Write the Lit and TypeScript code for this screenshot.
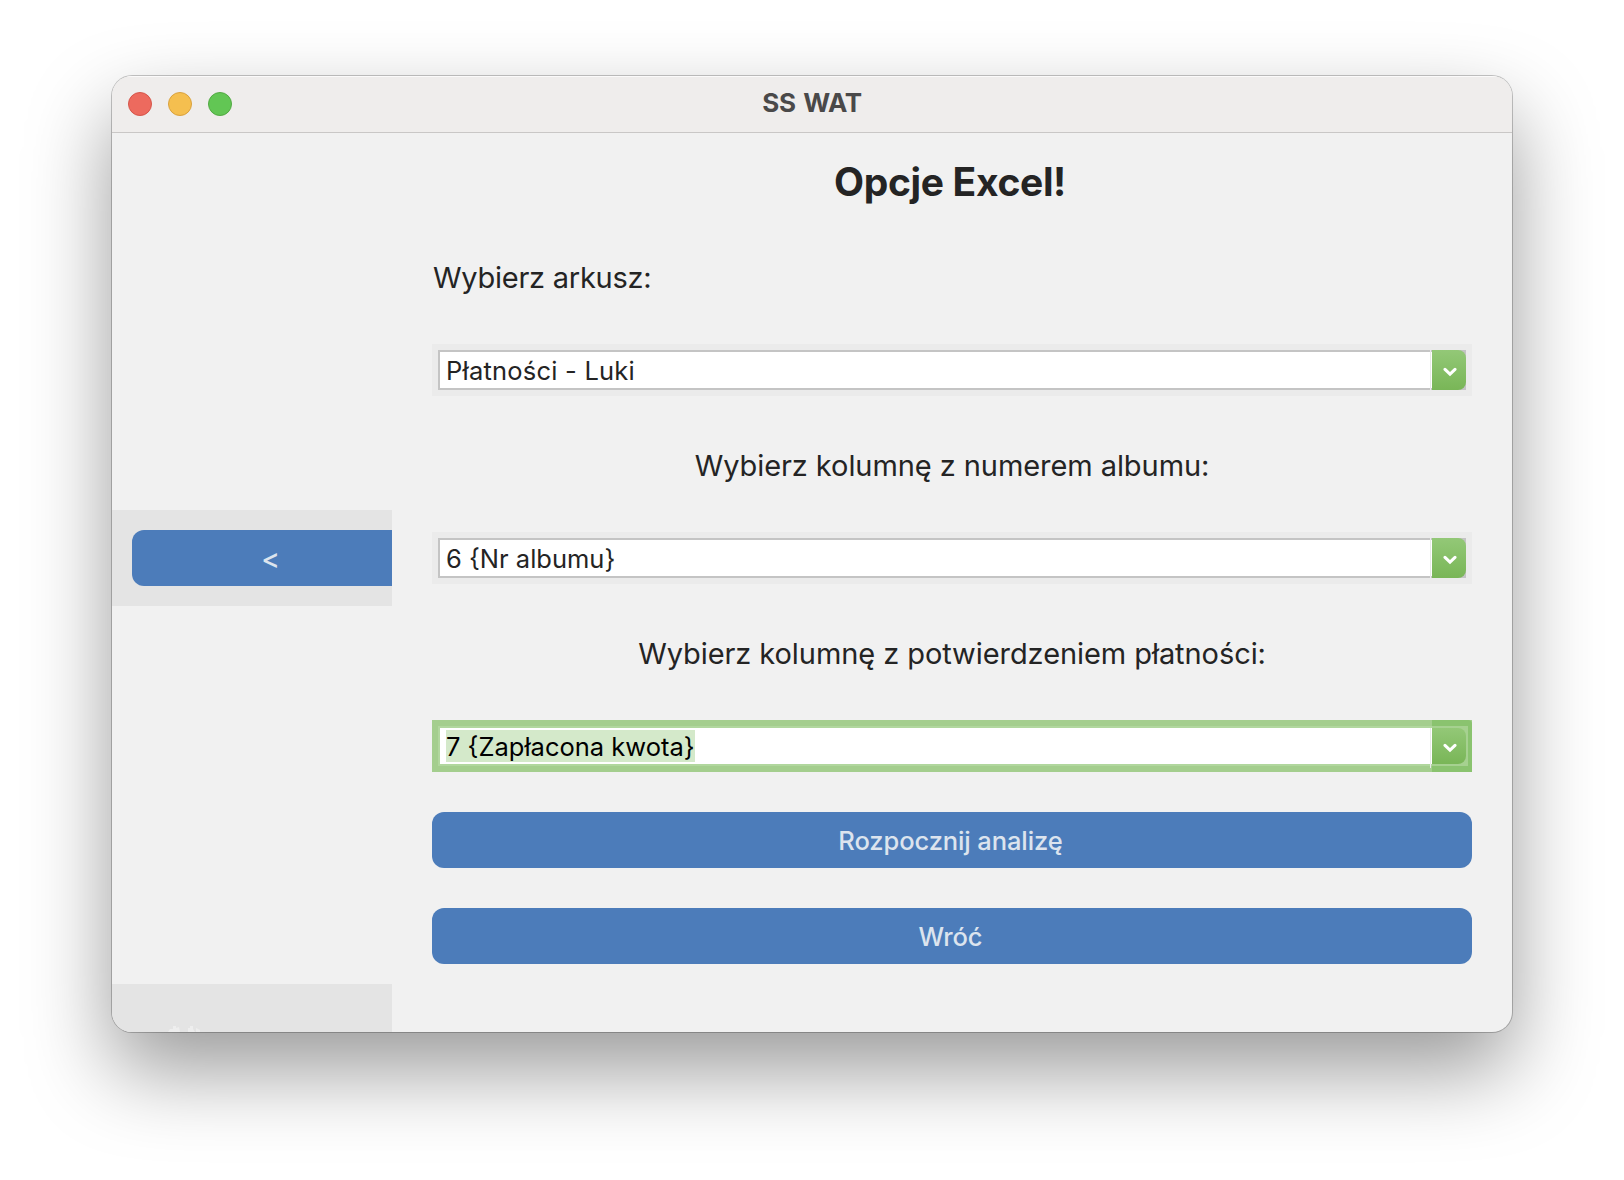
import { LitElement, html, css } from "lit";
import { customElement, property } from "lit/decorators.js";
import { classMap } from "lit/directives/class-map.js";

@customElement("combo-box")
export class ComboBox extends LitElement {
  @property() value = "";
  @property({ type: Boolean }) focused = false;

  static styles = css`
    :host { display: block; }
    .combo {
      box-sizing: border-box;
      height: 52px;
      padding: 6px;
      display: flex;
      background: #ebebeb;
    }
    .field {
      box-sizing: border-box;
      flex: 1;
      height: 40px;
      border: 2px solid #c4c4c4;
      border-right: 0;
      background: #fff;
      display: flex;
      align-items: center;
      justify-content: space-between;
      padding-left: 6px;
    }
    .value {
      font-size: 25.5px;
      line-height: 31px;
      padding-top: 1px;
      white-space: pre;
    }
    .rule { width: 1px; height: 40px; margin: -2px 1px -2px 0; background: #e9e9e9; }
    .arrow {
      box-sizing: border-box;
      width: 34px;
      height: 40px;
      background: #c4c4c4;
    }
    .face {
      height: 100%;
      border-radius: 0 8px 8px 0;
      background: linear-gradient(#93c877, #79b657);
      display: flex;
      align-items: center;
      justify-content: center;
      padding-left: 2px;
      padding-top: 4px;
      box-sizing: border-box;
    }
    svg { display: block; }
    .focused.combo { background: #a4ce8e; padding-right: 0; }
    .focused .field { border-color: #b1d79e; }
    .focused .value { background: #d4e9ca; color: #000; }
    .focused .rule { height: 40px; margin: 0 1px -4px 0; }
    .focused .arrow {
      width: 40px;
      height: 52px;
      margin: -6px 0;
      padding: 6px 4px 6px 0;
      background: #8ac36f;
      border-radius: 0 4px 0 0;
    }
    .focused .face-frame { border: 2px solid #a6d190; border-left: 0; height: 36px; background: #a6d190; }
    .face-frame { height: 100%; }
  `;

  render() {
    return html`
      <div class=${classMap({ combo: true, focused: this.focused })}>
        <div class="field">
          <span class="value">${this.value}</span>
          <span class="rule"></span>
        </div>
        <div class="arrow">
          <div class="face-frame">
            <div class="face">
              <svg width="14" height="10" viewBox="0 0 14 10">
                <path d="M2 2.4 L7 7.2 L12 2.4" fill="none" stroke="#fff" stroke-width="3" stroke-linecap="round" />
              </svg>
            </div>
          </div>
        </div>
      </div>
    `;
  }
}

@customElement("app-root")
export class AppRoot extends LitElement {
  static styles = css`
    :host {
      display: block;
      box-sizing: border-box;
      width: 1624px;
      height: 1180px;
      padding: 76px 112px 148px;
      overflow: hidden;
      background: #fff;
      color: #242424;
      font-family: Inter, "Liberation Sans", sans-serif;
    }
    .window {
      height: 956px;
      border-radius: 20px;
      background: #f1f1f1;
      box-shadow: 0 0 0 1px rgba(0, 0, 0, 0.22), 0 38px 84px rgba(0, 0, 0, 0.4);
      overflow: hidden;
      display: flex;
      flex-direction: column;
    }
    .titlebar {
      box-sizing: border-box;
      height: 57px;
      border-bottom: 1px solid #c9c7c6;
      background: #efedec;
      box-shadow: inset 0 1px 0 #fbfafa;
      display: grid;
      grid-template-columns: 1fr auto 1fr;
      align-items: center;
      padding: 0 16px;
    }
    .lights { display: flex; gap: 16px; }
    .light { box-sizing: border-box; width: 24px; height: 24px; border-radius: 50%; }
    .close { background: #ed6a5e; border: 1px solid #d5554a; }
    .minimise { background: #f5bf4f; border: 1px solid #d9a13e; }
    .zoom { background: #62c654; border: 1px solid #52a943; }
    .title {
      font-size: 26px;
      font-weight: 700;
      color: #4a4949;
      line-height: 52px;
      margin-bottom: 3px;
      letter-spacing: -0.4px;
      word-spacing: 2px;
    }
    .body { flex: 1; min-height: 0; display: flex; }
    .side { width: 280px; display: flex; flex-direction: column; overflow: hidden; }
    .panel {
      box-sizing: border-box;
      height: 96px;
      margin-top: 377px;
      padding: 20px 0 20px 20px;
      background: #e4e4e4;
    }
    .panel .button { width: 280px; font-size: 28px; }
    .footer {
      margin-top: 378px;
      flex: 1;
      background: #e4e4e4;
      display: flex;
      align-items: flex-end;
      padding-left: 56px;
    }
    .footer svg { display: block; }
    .content { flex: 1; padding: 0 40px; }
    .spaced { letter-spacing: 0.22px; }
    .heading {
      margin: 0;
      padding-right: 4px;
      font-size: 39px;
      line-height: 98px;
      height: 97px;
      font-weight: 700;
      letter-spacing: -0.35px;
      text-align: center;
    }
    .label {
      height: 34px;
      margin: 52px 0 50px;
      overflow: hidden;
      font-size: 29px;
      font-weight: 430;
      line-height: 35px;
      letter-spacing: -0.07px;
      text-align: center;
      white-space: nowrap;
    }
    .label.first { margin-top: 30px; padding-left: 1px; text-align: left; letter-spacing: -0.25px; }
    .button {
      display: block;
      box-sizing: border-box;
      width: 100%;
      height: 56px;
      margin: 0;
      padding: 1px 3px 0 0;
      border: 0;
      border-radius: 12px;
      background: #4c7cba;
      color: #dce4ee;
      font: 500 25.5px Inter, "Liberation Sans", sans-serif;
      text-align: center;
    }
    .content .button { margin-top: 40px; letter-spacing: -0.1px; }
  `;

  render() {
    return html`
      <div class="window">
        <div class="titlebar">
          <div class="lights">
            <span class="light close"></span>
            <span class="light minimise"></span>
            <span class="light zoom"></span>
          </div>
          <div class="title">SS WAT</div>
        </div>
        <div class="body">
          <div class="side">
            <div class="panel"><button class="button">&lt;</button></div>
            <div class="footer">
              <svg width="32" height="6" viewBox="0 0 32 6" fill="#eeeeee">
                <path d="M0 6 L2 3 L5 3 L5 0 H8 L8 2 L11 1 L12 6 Z M20 6 V2 H22 V0 H25 V3 L27 6 Z M28 6 V2 L32 4 V6 Z" />
              </svg>
            </div>
          </div>
          <div class="content">
            <h1 class="heading">Opcje Excel!</h1>
            <div class="label first">Wybierz arkusz:</div>
            <combo-box class="spaced" value="Płatności - Luki"></combo-box>
            <div class="label">Wybierz kolumnę z numerem albumu:</div>
            <combo-box value="6 {Nr albumu}"></combo-box>
            <div class="label">Wybierz kolumnę z potwierdzeniem płatności:</div>
            <combo-box value="7 {Zapłacona kwota}" focused></combo-box>
            <button class="button">Rozpocznij analizę</button>
            <button class="button">Wróć</button>
          </div>
        </div>
      </div>
    `;
  }
}
